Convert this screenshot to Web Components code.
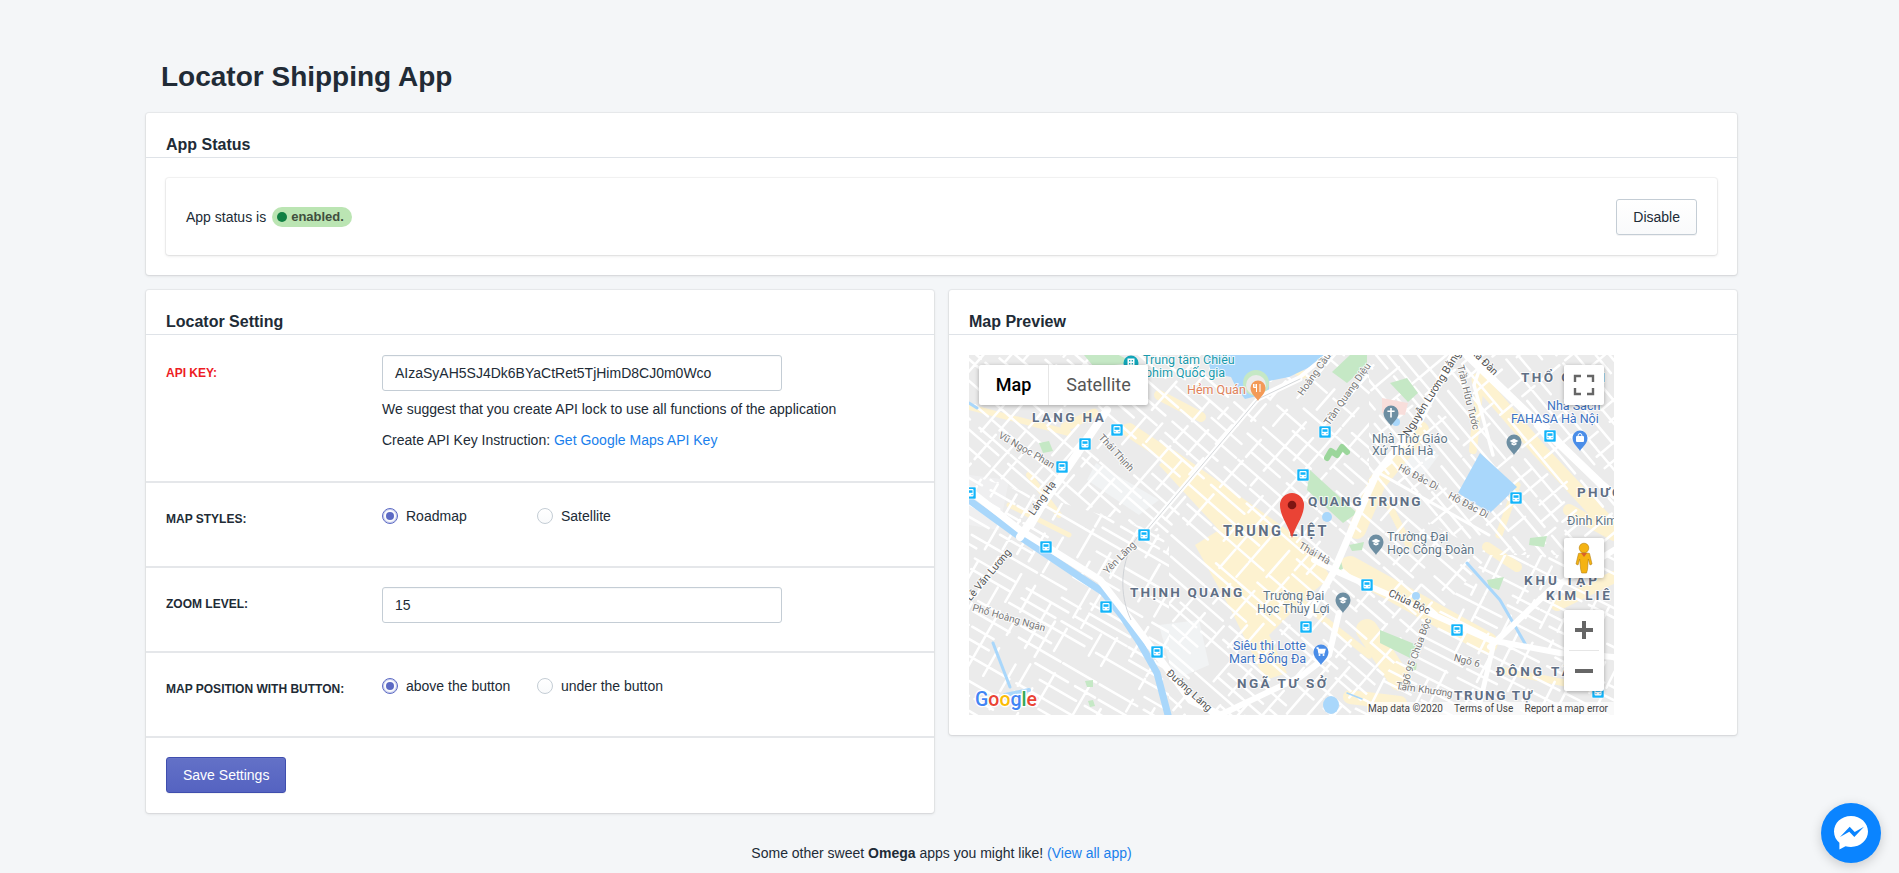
<!DOCTYPE html>
<html lang="en"><head><meta charset="utf-8"><title>Locator Shipping App</title>
<style>
html,body{margin:0;padding:0;height:873px;overflow:hidden;background:#f4f6f8;font-family:"Liberation Sans",Arial,sans-serif;color:#212b36}
</style></head>
<body>
<x-app>
  <x-title>Locator Shipping App</x-title>
  <x-card heading="App Status">
    <x-status-box>
      <span>App status is</span><x-badge>enabled.</x-badge>
      <x-button slot="action">Disable</x-button>
    </x-status-box>
  </x-card>
  <x-columns>
    <x-card heading="Locator Setting" flush>
      <x-row label="API KEY:" danger first>
        <x-input>AIzaSyAH5SJ4Dk6BYaCtRet5TjHimD8CJ0m0Wco</x-input>
        <x-note style="margin-top:8px">We suggest that you create API lock to use all functions of the application</x-note>
        <x-note>Create API Key Instruction: <a style="color:#1a7fec;text-decoration:none">Get Google Maps API Key</a></x-note>
      </x-row>
      <x-row label="MAP STYLES:" offset>
        <x-radios><x-radio checked>Roadmap</x-radio><x-radio>Satellite</x-radio></x-radios>
      </x-row>
      <x-row label="ZOOM LEVEL:">
        <x-input>15</x-input>
      </x-row>
      <x-row label="MAP POSITION WITH BUTTON:" offset>
        <x-radios><x-radio checked>above the button</x-radio><x-radio>under the button</x-radio></x-radios>
      </x-row>
      <x-save-row><x-button primary>Save Settings</x-button></x-save-row>
    </x-card>
    <x-card heading="Map Preview">
      <x-map></x-map>
    </x-card>
  </x-columns>
  <x-footer>Some other sweet <b>Omega</b> apps you might like! <a style="color:#1a7fec;text-decoration:none">(View all app)</a></x-footer>
</x-app>
<x-messenger></x-messenger>
<script>
function def(name, css, html, init){
  customElements.define(name, class extends HTMLElement{
    constructor(){super();const r=this.attachShadow({mode:'open'});
      r.innerHTML='<style>'+css+'</style>'+(typeof html==='function'?html(this):html);}
    connectedCallback(){ if(init) init(this); }
  });
}
def('x-app',':host{display:block;padding:0 162px 0 146px;box-sizing:border-box;width:1899px}','<slot></slot>');
def('x-title',':host{display:block;font:bold 28px/32px "Liberation Sans",Arial,sans-serif;color:#212b36;padding:61px 0 20px 15px}','<slot></slot>');
def('x-columns',':host{display:grid;grid-template-columns:788px 788px;gap:15px;margin-top:15px;align-items:start}','<slot></slot>');
def('x-card',`:host{display:block;background:#fff;border-radius:3px;box-shadow:0 0 0 1px rgba(63,63,68,.05),0 1px 3px 0 rgba(63,63,68,.15)}
 .h{box-sizing:content-box;border-bottom:1px solid #dfe3e8;padding:0 20px 2px;font:bold 16px/20px "Liberation Sans",Arial,sans-serif;color:#212b36;display:flex;align-items:flex-end;height:42px}
 .b{padding:20px}
 :host([flush]) .b{padding:0}`,
 el=>`<div class="h">${el.getAttribute('heading')}</div><div class="b"><slot></slot></div>`);
def('x-status-box',`:host{display:flex;align-items:center;justify-content:space-between;height:77px;box-sizing:border-box;padding:0 20px;border-radius:3px;background:#fff;font-size:14px;color:#212b36;box-shadow:0 0 0 1px rgba(63,63,68,.05),0 1px 3px 0 rgba(63,63,68,.15)}
 .l{display:flex;align-items:center;gap:6px}`,
 '<div class="l"><slot></slot></div><slot name="action"></slot>');
def('x-badge',`:host{display:inline-flex;align-items:center;height:20px;box-sizing:border-box;width:80px;padding:0 0 0 5px;border-radius:10px;background:#bbe5b3;color:#414f3e;font:bold 13px/20px "Liberation Sans",Arial,sans-serif}
 i{display:block;width:10px;height:10px;border-radius:50%;background:#108043;margin-right:4px}`,'<i></i><slot></slot>');
def('x-button',`:host{display:inline-flex;align-items:center;justify-content:center;height:36px;box-sizing:border-box;padding:0 16px;border:1px solid #c4cdd5;border-radius:3px;background:linear-gradient(180deg,#fff,#f9fafb);color:#212b36;font:14px "Liberation Sans",Arial,sans-serif;box-shadow:0 1px 0 0 rgba(22,29,37,.05)}
 :host([primary]){background:linear-gradient(180deg,#6371c7,#5563c1);border-color:#3f4eae;color:#fff;box-shadow:inset 0 1px 0 0 #6774c8,0 1px 0 0 rgba(22,29,37,.05)}`,'<slot></slot>');
def('x-row',`:host{display:grid;grid-template-columns:216px 1fr;min-height:83px;padding:0 20px;border-top:2px solid #e5e7ea}
 :host([first]){border-top:0;min-height:146px}
 .lab{font:bold 12px/14px "Liberation Sans",Arial,sans-serif;color:#212b36;padding-top:29px;text-transform:uppercase}
 :host([first]) .lab{padding-top:31px}
 :host([danger]) .lab{color:#ed1c24}
 .c{padding-top:19px}
 :host([first]) .c{padding-top:20px}
 :host([offset]) .c{padding-top:25px}`,
 el=>`<div class="lab">${el.getAttribute('label')}</div><div class="c"><slot></slot></div>`);
def('x-input',`:host{display:block;width:400px;height:36px;box-sizing:border-box;border:1px solid #c4cdd5;border-radius:3px;background:#fff;padding:0 12px;font:14px/34px "Liberation Sans",Arial,sans-serif;color:#212b36;box-shadow:inset 0 1px 0 0 rgba(99,115,129,.05)}`,'<slot></slot>');
def('x-note',`:host{display:block;font:14px/20px "Liberation Sans",Arial,sans-serif;color:#212b36;margin-top:11px}`,'<slot></slot>');
def('x-radios',`:host{display:grid;grid-template-columns:155px 1fr}`,'<slot></slot>');
def('x-radio',`:host{display:flex;align-items:center;gap:8px;font:14px/16px "Liberation Sans",Arial,sans-serif;color:#212b36;height:16px}
 i{display:block;width:16px;height:16px;box-sizing:border-box;border:1px solid #c4cdd5;border-radius:50%;background:linear-gradient(180deg,#fff,#f9fafb);position:relative}
 :host([checked]) i{border:1px solid #5c6ac4;box-shadow:0 0 0 1px #c5cbeb inset}
 :host([checked]) i::after{content:"";position:absolute;left:3px;top:3px;width:8px;height:8px;border-radius:50%;background:#5c6ac4}`,'<i></i><slot></slot>');
def('x-save-row',`:host{display:block;padding:19px 20px 20px;border-top:2px solid #e5e7ea}`,'<slot></slot>');
def('x-footer',`:host{display:block;text-align:center;font:14px/20px "Liberation Sans",Arial,sans-serif;color:#212b36;margin-top:30px}`,'<slot></slot>');
def('x-messenger',`:host{position:fixed;left:1821px;top:803px;width:60px;height:60px;border-radius:50%;background:#0a84ff;box-shadow:0 3px 12px rgba(0,0,0,.18);display:block}
 svg{display:block}`,`<svg width="60" height="60" viewBox="0 0 60 60"><path d="M30 13C20.300 13 13 20 13 28.500c0 4.700 2.100 8.600 5.400 11.300V46.500l6.100-3.300c1.700.5 3.500.7 5.500.7 9.700 0 17-7 17-15.400S39.700 13 30 13z" fill="#fff"/><path d="M19 34l9.700-10.300 5 5.200 9.300-5.200-9.700 10.400-5-5.300z" fill="#0a84ff"/></svg>`);

function mapSvg(){
  let seed=11; const R=()=>(seed=(seed*16807)%2147483647)/2147483647;
  const Y='#fdf2d0',G='#c5e8c5',W='#a9d7fb';
  let s='';
  const pl=(pts,w,c,extra='')=>`<polyline points="${pts}" fill="none" stroke="${c}" stroke-width="${w}" stroke-linecap="round" stroke-linejoin="round" ${extra}/>`;
  const pg=(pts,c)=>`<polygon points="${pts}" fill="${c}"/>`;
  s+=pg('127,108 190,145 170,160 118,125','#f1f3f4')+pg('190,270 230,265 240,310 205,325','#f1f3f4')+pg('440,90 470,100 455,120 430,110','#f1f3f4')+pg('0,120 40,125 30,175 0,170','#efeff0');
  s+=pg('205,95 262,135 340,190 362,222 340,240 300,280 318,318 296,325 262,255 226,190 250,175 190,110',Y);
  [['160,75 205,105',14],['451,75 408,128 388,175',18],['381,212 518,288',22],['398,275 431,325',22],
   ['510,25 570,95 640,170',15],['511,28 504,95',8],['531,315 631,335',7],['381,342 431,348',14],['0,52 100,78',6],['190,40 232,62',10],
   ['518,192 548,212',10],['600,155 645,180',12],['335,20 300,2',7],['588,250 645,222',12],['60,120 90,160',6],['100,180 40,150',5],['330,245 400,300',7],['420,150 440,190',7],['548,130 530,180',7],['96,72 125,58',9]]
   .forEach(([p,w])=>s+=pl(p,w,Y));
  const zones=[[41,'0,0 400,0 400,135 520,200 380,360 200,360 200,180 0,120',300,150],
    [50,'400,0 645,0 645,200 520,200 400,135',520,100],
    [30,'0,120 200,180 200,360 0,360',100,260],
    [27,'380,360 520,200 645,200 645,360',510,280]];
  let defs='',layers='';
  zones.forEach(([a,clip,cx,cy],i)=>{
    const rad=a*Math.PI/180,c=Math.cos(rad),n=Math.sin(rad);
    const P=(u,v)=>`${(u*-n+v*c+cx).toFixed(1)} ${(u*c+v*n+cy).toFixed(1)}`;
    let st='';
    for(let u=-420;u<420;u+=8+R()*9){ let v=-420; while(v<420){const l=16+R()*48; if(R()>.2) st+=`M${P(u,v)}L${P(u,v+l)}`; v+=l+R()*14;} }
    for(let v=-420;v<420;v+=11+R()*13){ let u=-420; while(u<420){const l=10+R()*30; if(R()>.38) st+=`M${P(u,v)}L${P(u+l,v)}`; u+=l+R()*20;} }
    defs+=`<clipPath id="z${i}"><polygon points="${clip}"/></clipPath>`;
    layers+=`<path clip-path="url(#z${i})" d="${st}" stroke="#fff" stroke-width="2.500" fill="none" stroke-linecap="round"/>`;
  });
  s=`<defs>${defs}</defs>`+s+layers;
  ['421,28 438,23 449,38 439,47','363,17 381,0 398,0 398,10 378,28','341,115 388,158 374,168 338,135','411,275 448,290 441,303 411,288','518,225 535,222 530,235 520,232','561,183 578,181 575,192 560,190','115,0 150,0 165,8 125,12','70,88 80,86 84,96 74,98','116,326 124,325 124,332 118,332','119,346 124,345 126,351 121,352','380,190 395,187 393,195 383,196','364,208 372,206 374,214 368,216','438,310 448,308 447,315 440,316','250,0 290,0 284,8 262,5']
   .forEach(p=>s+=pg(p,G));
  s+=pl('358,103 362,96 368,100 373,92 378,97',6,'#9bd69b');
  s+=pg('413,43 439,48 436,60 413,58','#f8dedb');
  s+=`<path d="M238 0H358L345 10 320 22 300 26 300 38 276 44 268 34 262 22 242 18z" fill="${W}"/>`;
  s+=`<circle cx="287" cy="28" r="13" fill="${G}"/><circle cx="287" cy="30" r="10" fill="#ebebeb"/>`;
  s+=pg('511,98 548,132 521,158 489,138',W);
  s+=pl('0,145 44,177 111,222 134,237 154,262 171,288 188,318 199,360',7,W,'stroke-linecap="butt"');
  s+=pl('24,288 41,332',3,W)+pl('498,208 531,245 558,292',3,W)+pl('0,48 8,53',3,W);
  s+=`<ellipse cx="362" cy="350" rx="8" ry="9" fill="${W}"/><circle cx="427" cy="67" r="4" fill="${W}"/><circle cx="358" cy="162" r="5" fill="${W}"/><circle cx="447" cy="241" r="4" fill="${W}"/>`+pl('36,340 60,335',4,W)+pl('378,338 393,344',1.500,W);
  [['138,55 95,118 51,182',8],['0,135 51,175 131,225 164,268 194,308 221,345 251,360',7],['484,0 451,65 408,118 388,162 364,218 340,260',7],['498,0 631,128 645,140',8],
   ['345,205 371,218 521,285 591,298 645,302',6],['521,292 581,235 645,195',6],['524,292 508,360',5],['251,360 331,322 360,300 370,258',6],['289,42 331,22 358,0',4],['410,118 520,180',3],['524,100 505,30 512,10',3.500]]
   .forEach(([p,w])=>s+=pl(p,w,'#fff'));
  s+=pl('331,24 289,44 178,175',5,'#fff')+pl('331,24 289,44 178,175',.9,'#cfd2d6');
  s+=`<path d="M170 180C150 205 150 240 162 265" stroke="#c8ccd0" stroke-width=".8" fill="none"/>`;
  [[148,75],[116,89],[93,112],[1,138],[175,180],[334,120],[356,77],[581,81],[547,143],[77,192],[137,252],[188,297],[398,230],[337,272],[488,275],[629,337]].forEach(([x,y])=>{
    s+=`<g transform="translate(${x-6} ${y-6})"><rect width="12" height="12" rx="1" fill="#13b5fa" stroke="#fff" stroke-width=".6"/><rect x="2.500" y="2" width="7" height="7.500" rx="1" fill="#fff"/><rect x="3.500" y="3.300" width="5" height="2.500" fill="#13b5fa"/><circle cx="4" cy="7.600" r=".7" fill="#13b5fa"/><circle cx="8" cy="7.600" r=".7" fill="#13b5fa"/></g>`;
  });
  const pin=(x,y,c,k)=>{
    const g={grad:`<path d="M${x-4.500} ${y-1}l4.500-2.200 4.500 2.200-4.500 2.200zM${x-2.500} ${y+.5}v2l2.500 1 2.500-1v-2l-2.500 1.200z" fill="#fff"/>`,
      cross:`<path d="M${x-.8} ${y-5}h1.600v2.500h2.800v1.600h-2.800v5.500h-1.600v-5.500h-2.800v-1.600h2.800z" fill="#fff"/>`,
      fork:`<path d="M${x-3} ${y-4}v3.500M${x-1.500} ${y-4}v8M${x-4.500} ${y-4}v3.500h3M${x+2} ${y-4}v8" stroke="#fff" stroke-width="1" fill="none"/>`,
      bag:`<rect x="${x-4}" y="${y-2}" width="8" height="6" rx="1" fill="#fff"/><path d="M${x-2} ${y-2}a2 2.500 0 0 1 4 0" stroke="#fff" fill="none"/>`,
      cart:`<path d="M${x-4.500} ${y-4}h1.500l1 5h5l1-3.500h-6.500" stroke="#fff" stroke-width="1.300" fill="#fff"/><circle cx="${x-1.500}" cy="${y+3}" r="1" fill="#fff"/><circle cx="${x+2.500}" cy="${y+3}" r="1" fill="#fff"/>`,
      bld:`<rect x="${x-3.500}" y="${y-4.500}" width="7" height="9" fill="#fff"/><path d="M${x-2} ${y-3}h1.300v1.500h-1.300zM${x+.7} ${y-3}h1.300v1.500h-1.300zM${x-2} ${y}h1.300v1.500h-1.300zM${x+.7} ${y}h1.300v1.500h-1.300z" fill="${c}"/>`}[k];
    return `<path d="M${x} ${y+13}C${x-2} ${y+9} ${x-7.500} ${y+6} ${x-7.500} ${y}a7.500 7.500 0 0 1 15 0C${x+7.500} ${y+6} ${x+2} ${y+9} ${x} ${y+13}z" fill="${c}"/>`+g;
  };
  s+=pin(162,8,'#12a5b8','bld')+pin(289,33,'#f39a57','fork')+pin(422,58,'#6d8ea2','cross')+pin(545,87,'#6d8ea2','grad')+pin(611,83,'#4a8de8','bag')+pin(407,187,'#6d8ea2','grad')+pin(374,245,'#6d8ea2','grad')+pin(352,297,'#4a8de8','cart');
  const halo='paint-order="stroke" stroke="#fff" stroke-opacity=".8" stroke-width="2" stroke-linejoin="round"';
  const D=(t,x,y,ls=2.400,fs=13.500)=>`<text x="${x}" y="${y}" font-family="Roboto" font-weight="700" font-size="${fs}" letter-spacing="${ls}" fill="#5f6f85" ${halo}>${t}</text>`;
  const P=(t,x,y,c='#5f7687',fs=12.500)=>`<text x="${x}" y="${y}" font-family="Roboto" font-size="${fs}" fill="${c}" ${halo}>${t}</text>`;
  const Rd=(t,x,y,a,c='#777',fs=10)=>`<text transform="translate(${x} ${y}) rotate(${a})" text-anchor="middle" font-family="Roboto" font-size="${fs}" fill="${c}" ${halo}>${t}</text>`;
  s+=D('LANG HA',63,67)+D('THỔ QUAN',552,27)+D('QUANG TRUNG',339,151,1.900)+D('TRUNG LIỆT',254,181,2.500,14.500)+D('PHƯƠ',608,142)+D('THỊNH QUANG',161,242,2.200)+D('NGÃ TƯ SỞ',268,333,2.400)+D('KHU TẬP',555,230,2.900)+D('KIM LIÊ',577,245,2.900)+D('ĐÔNG TÂM',527,321,3)+D('TRUNG TỰ',485,345,1.700);
  s+=P('Trung tâm Chiếu',174,9,'#1a9aac')+P('phim Quốc gia',176,22,'#1a9aac')+P('Hẻm Quán',218,39,'#e0825a')+P('Nhà Thờ Giáo',403,88)+P('Xứ Thái Hà',403,100)+P('Nhà Sách',578,55,'#3d72c2')+P('FAHASA Hà Nội',542,68,'#3d72c2')+P('Đình Kim',598,170)+P('Trường Đại',418,186)+P('Học Công Đoàn',418,199)+P('Trường Đại',294,245)+P('Học Thủy Lợi',288,258)+P('Siêu thị Lotte',264,295,'#3d72c2')+P('Mart Đống Đa',260,308,'#3d72c2');
  s+=Rd('Hoàng Cầu',348,21,-55)+Rd('Trần Quang Diệu',381,41,-55)+Rd('Nguyễn Lương Bằng',466,40,-58,'#555',11)+Rd('Trần Hữu Tước',496,43,76)+Rd('Xã Đàn',513,9,45,'#555',10.500)+Rd('Hồ Đắc Di',448,125,28)+Rd('Hồ Đắc Di',498,153,28)+Rd('Vũ Ngọc Phan',56,98,30)+Rd('Thái Thịnh',145,100,47)+Rd('Láng Hạ',76,145,-55,'#555',10.500)+Rd('Yên Lãng',153,205,-45)+Rd('Lê Văn Lương',22,222,-50,'#555',10.500)+Rd('Phố Hoàng Ngân',39,266,16)+Rd('Đường Láng',218,338,42,'#555',10.500)+Rd('Thái Hà',344,201,30)+Rd('Chùa Bộc',439,250,25,'#555',10.500)+Rd('Ngõ 95 Chùa Bộc',449,301,-70)+Rd('Ngõ 6',497,309,15)+Rd('Tam Khương',455,338,8);
  s+=`<text x="6" y="351" font-family="Roboto" font-size="20" font-weight="500" stroke="#fff" stroke-width="2.500" paint-order="stroke" textLength="62" lengthAdjust="spacingAndGlyphs"><tspan fill="#4285f4">G</tspan><tspan fill="#ea4335">o</tspan><tspan fill="#fbbc05">o</tspan><tspan fill="#4285f4">g</tspan><tspan fill="#34a853">l</tspan><tspan fill="#ea4335">e</tspan></text>`;
  s+=`<path d="M323 183C320 171 311 162 311 150a12 12 0 0 1 24 0C335 162 326 171 323 183z" fill="#ea4335"/><circle cx="323" cy="150" r="4.300" fill="#7e1512"/>`;
  return `<svg width="645" height="360" viewBox="0 0 645 360" style="display:block;background:#ebebeb">${s}</svg>`;
}
def('x-map',`:host{display:block;position:relative;width:645px;height:360px;overflow:hidden;font-family:Roboto,sans-serif}
 .ctl{position:absolute;background:#fff;box-shadow:0 1px 4px rgba(0,0,0,.3);border-radius:2px}
 .types{left:10px;top:10px;height:40px;display:flex;font-size:18px;line-height:40px}
 .types div{color:#565656}
 .types div:first-child{color:#000;font-weight:500;border-right:1px solid #e6e6e6;width:69px;text-align:center}
 .types div:last-child{width:99px;text-align:center}
 .sq{left:595px;width:40px}
 .z hr{margin:0 5px;border:0;border-top:1px solid #e6e6e6}
 svg{display:block}
 .attr{position:absolute;right:0;bottom:0;height:13px;width:247px;background:rgba(255,255,255,.7);font-size:10px;line-height:13px;color:#444;white-space:nowrap;display:flex;justify-content:space-between;padding:0 6px 0 1px;box-sizing:border-box}`,
 ()=>mapSvg()+`<div class="ctl types"><div>Map</div><div>Satellite</div></div>
 <div class="ctl sq" style="top:10px;height:40px"><svg width="40" height="40" viewBox="0 0 40 40"><path d="M11 17v-6h6M23 11h6v6M29 23v6h-6M17 29h-6v-6" fill="none" stroke="#666" stroke-width="2.400"/></svg></div>
 <div class="ctl sq" style="top:183px;height:40px"><svg width="40" height="40" viewBox="0 0 40 40"><circle cx="20" cy="10" r="4.800" fill="#f5b312" stroke="#b57f10" stroke-width=".6"/><path d="M14.500 15.500C17 14.500 23 14.500 25.500 15.500L28 26l-2 1-1.700-6-.8 10.500-1 3.500h-4.800l-1-3.500L15.700 21 14 27l-2-1z" fill="#f5b312" stroke="#b57f10" stroke-width=".6"/><path d="M17 15l3 4 3-4z" fill="#d9602a"/></svg></div>
 <div class="ctl sq z" style="top:255px;height:81px"><svg width="40" height="40" viewBox="0 0 40 40"><path d="M18 11h4v7h7v4h-7v7h-4v-7h-7v-4h7z" fill="#666"/></svg><hr><svg width="40" height="40" viewBox="0 0 40 40"><rect x="11" y="18" width="18" height="4" fill="#666"/></svg></div>
 <div class="attr"><span>Map data ©2020</span><span>Terms of Use</span><span>Report a map error</span></div>`);
</script>
</body></html>
